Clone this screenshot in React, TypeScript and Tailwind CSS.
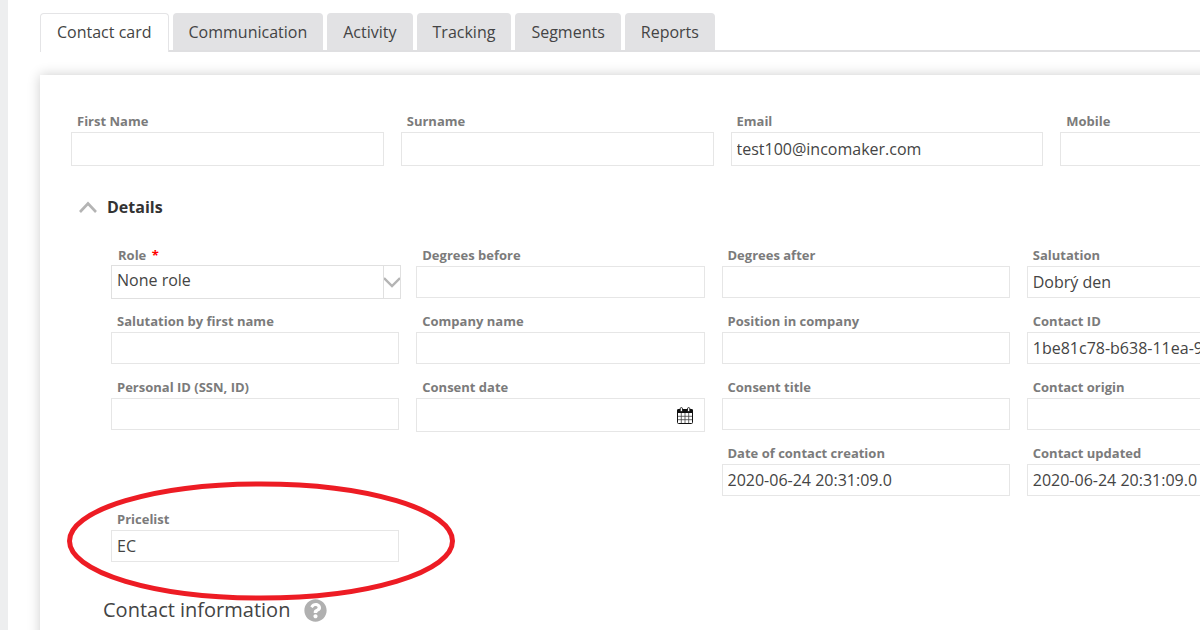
import React, { useState } from 'react';
import { FaQuestionCircle } from 'react-icons/fa';

const TABS = ['Contact card', 'Communication', 'Activity', 'Tracking', 'Segments', 'Reports'];

interface FieldProps {
  id: string;
  label: string;
  value?: string;
  tall?: boolean;
  className?: string;
  children?: React.ReactNode;
}

function Field({ id, label, value = '', tall = false, className = '', children }: FieldProps) {
  return (
    <div className={className}>
      <label htmlFor={id} className="mb-px block pl-1.5 text-[13px] leading-5 font-bold text-[#7b7b7b]">
        {label}
      </label>
      <div className="relative">
        <input
          id={id}
          type="text"
          defaultValue={value}
          className={`block w-full border border-[#e6e6e6] bg-white px-[5px] text-base text-[#444] outline-none focus:border-gray-400 ${tall ? 'h-[34px]' : 'h-8'}`}
        />
        {children}
      </div>
    </div>
  );
}

function RoleSelect() {
  return (
    <div>
      <label htmlFor="role" className="block pl-[7px] text-[13px] leading-5 font-bold text-[#7b7b7b]">
        Role <span className="pl-0.5 text-[#f00]">*</span>
      </label>
      <div className="relative w-[calc(100%+2px)]">
        <select
          id="role"
          className="block h-[34px] w-full appearance-none border border-[#e0e0e0] bg-white px-[5px] pb-1 text-base text-[#444] outline-none"
        >
          <option>None role</option>
        </select>
        <span className="pointer-events-none absolute inset-y-0 right-0 flex w-[18px] items-center justify-center border border-[#e0e0e0]">
          <svg viewBox="0 0 16 11" className="h-[11px] w-4" fill="none" stroke="#b4b4b4" strokeWidth="2.4">
            <path d="M0 1l8 8 8-8" />
          </svg>
        </span>
      </div>
    </div>
  );
}

function CalendarIcon() {
  return (
    <svg viewBox="0 0 16 17" className="h-[17px] w-4">
      <rect x="0.5" y="2.5" width="15" height="14" rx="1" fill="#fff" stroke="#111" />
      <path d="M0 3.5Q0 2 1.5 2h13Q16 2 16 3.5V6H0z" fill="#111" />
      <path d="M4.3 6v10M8 6v10M11.7 6v10M1 9.3h14M1 12.7h14" stroke="#444" strokeWidth="0.8" />
      <rect x="3.2" y="0.6" width="2.3" height="4" rx="1.1" fill="#fff" stroke="#111" strokeWidth="0.9" />
      <rect x="10.5" y="0.6" width="2.3" height="4" rx="1.1" fill="#fff" stroke="#111" strokeWidth="0.9" />
    </svg>
  );
}

export default function App() {
  const [activeTab, setActiveTab] = useState('Contact card');
  const [open, setOpen] = useState(true);

  return (
    <div className="h-screen overflow-hidden bg-white font-['Open_Sans',sans-serif] text-[#444]">
      <div className="flex min-h-full min-w-[1403px] flex-col border-l-8 border-[#edeeef] pt-[13px] pl-8">
        {/* Tabs */}
        <nav className="flex gap-1 border-b-2 border-[#dfdfe1]">
          {TABS.map((tab) => (
            <button
              key={tab}
              type="button"
              onClick={() => setActiveTab(tab)}
              className={
                tab === activeTab
                  ? '-mb-0.5 h-[39px] rounded-t border border-b-0 border-[#e4e4e6] bg-white px-4 pb-0.5 text-base'
                  : 'h-[37px] cursor-pointer rounded-t bg-[#e2e2e4] px-4 text-base'
              }
            >
              {tab}
            </button>
          ))}
        </nav>

        <main className="mt-[23px] flex-1 bg-white pt-9 pr-[30px] pb-10 pl-[31px] shadow-[0_0_12px_rgba(0,0,0,0.2)]">
          <div className="grid grid-cols-4 gap-[17px]">
            <Field id="firstName" label="First Name" tall />
            <Field id="surname" label="Surname" tall />
            <Field id="email" label="Email" value="test100@incomaker.com" tall />
            <Field id="mobile" label="Mobile" tall />
          </div>

          {/* Details section */}
          <button
            type="button"
            onClick={() => setOpen(!open)}
            className="mt-[29px] flex h-6 cursor-pointer items-center gap-2.5 pl-2 text-base font-bold text-[#333]"
          >
            <svg
              viewBox="0 0 18 12"
              className={`h-3 w-[18px] ${open ? '' : 'rotate-180'}`}
              fill="none"
              stroke="#b4b4b4"
              strokeWidth="2.6"
            >
              <path d="M1 11l8-8.5 8 8.5" />
            </svg>
            Details
          </button>

          {open && (
            <div className="mt-[26px] grid auto-rows-[66px] grid-cols-4 gap-x-[17px] pr-[58px] pl-10">
              <RoleSelect />
              <Field id="degreesBefore" label="Degrees before" />
              <Field id="degreesAfter" label="Degrees after" />
              <Field id="salutation" label="Salutation" value="Dobrý den" />

              <Field id="salutationFirst" label="Salutation by first name" />
              <Field id="company" label="Company name" />
              <Field id="position" label="Position in company" />
              <Field id="contactId" label="Contact ID" value="1be81c78-b638-11ea-9" />

              <Field id="personalId" label="Personal ID (SSN, ID)" />
              <Field id="consentDate" label="Consent date" tall>
                <button type="button" aria-label="Consent date" className="absolute inset-y-0 right-3 cursor-pointer">
                  <CalendarIcon />
                </button>
              </Field>
              <Field id="consentTitle" label="Consent title" />
              <Field id="origin" label="Contact origin" />

              <Field id="created" label="Date of contact creation" value="2020-06-24 20:31:09.0" className="col-start-3" />
              <Field id="updated" label="Contact updated" value="2020-06-24 20:31:09.0" />

              {/* Pricelist is circled with a hand-drawn marker */}
              <div className="relative">
                <Field id="pricelist" label="Pricelist" value="EC" />
                <svg
                  viewBox="0 0 388 120"
                  className="pointer-events-none absolute -top-7 -left-11 z-10 h-[120px] w-[388px]"
                  fill="none"
                  stroke="#ed1c24"
                  strokeWidth="5"
                >
                  <ellipse cx="194" cy="60" rx="191.500" ry="57" />
                </svg>
              </div>
            </div>
          )}

          <h2 className="mt-[21px] flex h-7 items-center gap-3.5 pl-8 text-xl text-[#444]">
            Contact information
            <FaQuestionCircle className="size-[23px] text-[#b0b0b0]" />
          </h2>
        </main>
      </div>
    </div>
  );
}
